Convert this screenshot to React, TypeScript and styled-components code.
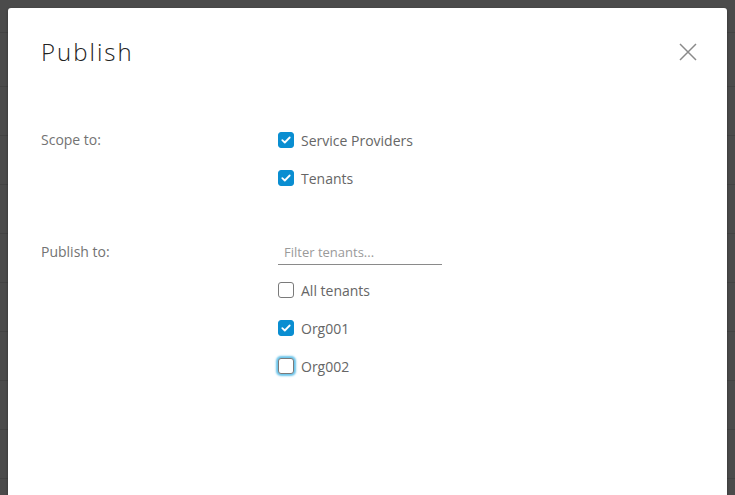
import React from "react";
import styled, { createGlobalStyle } from "styled-components";

const Global = createGlobalStyle`
  html, body { margin: 0; padding: 0; height: 100%; overflow: hidden; }
  body {
    background-color: #4b4b4b;
    background-image: repeating-linear-gradient(
      to bottom,
      transparent 0px,
      transparent 48px,
      #434343 48px,
      #434343 49px
    );
    background-position: 0 38px;
    font-family: "Open Sans", "Liberation Sans", sans-serif;
  }
`;

const Page = styled.div`
  display: flex;
  padding: 8px 0 0 8px;
  height: 100vh;
  box-sizing: border-box;
`;

const Modal = styled.div`
  width: 719px;
  height: 520px;
  background: #ffffff;
  border-radius: 3px;
  box-shadow: 0 1px 3px rgba(0, 0, 0, 0.35);
  padding: 0 30px 0 33px;
  box-sizing: border-box;
  display: flex;
  flex-direction: column;
`;

const Header = styled.div`
  display: flex;
  align-items: center;
  justify-content: space-between;
  padding-top: 28px;
  height: 32px;
`;

const Title = styled.h1`
  margin: 0;
  font-size: 24px;
  font-weight: 300;
  line-height: 32px;
  color: #222222;
  letter-spacing: 2px;
`;

const CloseButton = styled.button`
  border: none;
  background: none;
  padding: 0;
  width: 20px;
  height: 20px;
  display: flex;
  align-items: center;
  justify-content: center;
  cursor: pointer;
  margin-right: -1px;
`;

const Body = styled.div`
  display: flex;
  flex-direction: column;
  gap: 50px;
  padding-top: 60px;
`;

const Section = styled.div`
  display: grid;
  grid-template-columns: 237px 1fr;
`;

const Label = styled.div`
  font-size: 14px;
  line-height: 24px;
  color: #737373;
`;

const Options = styled.div`
  display: flex;
  flex-direction: column;
  gap: 14px;
`;

const OptionRow = styled.label`
  display: flex;
  align-items: center;
  gap: 7px;
  height: 24px;
  font-size: 14px;
  color: #666666;
`;

const Box = styled.span<{ $checked?: boolean; $focused?: boolean }>`
  width: 16px;
  height: 16px;
  box-sizing: border-box;
  border-radius: 3px;
  border: 1px solid ${(p) => (p.$checked ? "#0a8ed1" : "#7a7a7a")};
  background: ${(p) => (p.$checked ? "#0a8ed1" : "#ffffff")};
  display: flex;
  align-items: center;
  justify-content: center;
  box-shadow: ${(p) => (p.$focused ? "0 0 2px 2px #6bc4ea" : "none")};
`;

const FilterInput = styled.input`
  width: 164px;
  height: 25px;
  margin-bottom: -1px;
  box-sizing: border-box;
  border: none;
  border-bottom: 1px solid #8a8a8a;
  padding: 0 0 1px 6px;
  font-family: inherit;
  font-size: 13px;
  color: #565656;
  outline: none;
  &::placeholder { color: #9a9a9a; }
`;

const Check = () => (
  <svg width="10" height="8" viewBox="0 0 10 8">
    <path d="M1.3 4.2 L3.8 6.5 L8.7 1.5" fill="none" stroke="#fff" strokeWidth="1.8" strokeLinecap="round" strokeLinejoin="round" />
  </svg>
);

const Option = ({ label, checked, focused }: { label: string; checked?: boolean; focused?: boolean }) => (
  <OptionRow>
    <Box $checked={checked} $focused={focused}>{checked && <Check />}</Box>
    {label}
  </OptionRow>
);

export default function App() {
  return (
    <>
      <Global />
      <Page>
        <Modal>
          <Header>
            <Title>Publish</Title>
            <CloseButton aria-label="Close">
              <svg width="18" height="18" viewBox="0 0 18 18">
                <path d="M1 1 L17 17 M17 1 L1 17" stroke="#8a8a8a" strokeWidth="1.5" />
              </svg>
            </CloseButton>
          </Header>
          <Body>
            <Section>
              <Label>Scope to:</Label>
              <Options>
                <Option label="Service Providers" checked />
                <Option label="Tenants" checked />
              </Options>
            </Section>
            <Section>
              <Label>Publish to:</Label>
              <Options>
                <FilterInput placeholder="Filter tenants..." />
                <Option label="All tenants" />
                <Option label="Org001" checked />
                <Option label="Org002" focused />
              </Options>
            </Section>
          </Body>
        </Modal>
      </Page>
    </>
  );
}
